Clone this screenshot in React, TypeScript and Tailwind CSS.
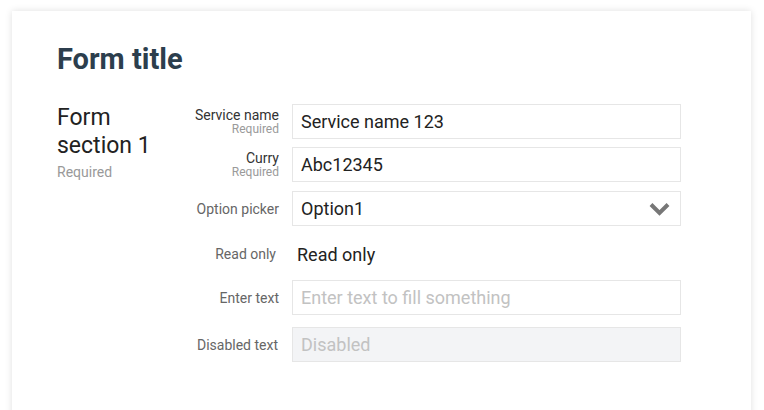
import React from "react";

const font = { fontFamily: "Roboto, 'Noto Sans', sans-serif" };

function Label({ text, required, dark }: { text: string; required?: boolean; dark?: boolean }) {
  return (
    <div className="flex flex-col items-end justify-center text-right">
      <div className={`text-[14px] leading-[16px] ${dark ? "text-[#333]" : "text-[#666]"}`}>{text}</div>
      {required && <div className="text-[12px] leading-[13px] text-[#9a9a9a]">Required</div>}
    </div>
  );
}

function Box({ children, disabled }: { children: React.ReactNode; disabled?: boolean }) {
  return (
    <div
      className={`h-[35px] w-[389px] border flex items-center pl-[8px] pr-[10px] text-[18px] ${
        disabled ? "bg-[#f3f4f6] border-[#e6e6e6]" : "bg-white border-[#e6e6e6]"
      }`}
    >
      {children}
    </div>
  );
}

export default function App() {
  return (
    <div className="h-[410px] bg-white pl-[12px] pr-[13px] pt-[11px] overflow-hidden" style={font}>
      <div className="h-[420px] bg-white shadow-[0_0_7px_rgba(0,0,0,0.13)] pl-[45px] pt-[30px]">
        <h1 className="text-[29px] leading-[36px] font-bold text-[#2c3e4d]">Form title</h1>
        <div className="flex mt-[27px]">
          <div className="w-[110px]">
            <div className="text-[23px] leading-[28px] text-[#222]">
              Form
              <br />
              section 1
            </div>
            <div className="text-[14px] leading-[17px] text-[#999] mt-[4px]">Required</div>
          </div>
          <div className="grid grid-cols-[112px_389px] gap-x-[13px] mt-[0px] text-[#222]">
            <Label text="Service name" required dark />
            <Box>Service name 123</Box>

            <div className="mt-[8px] flex justify-end">
              <Label text="Curry" required dark />
            </div>
            <div className="mt-[8px]">
              <Box>Abc12345</Box>
            </div>

            <div className="mt-[9px] flex justify-end">
              <Label text="Option picker" />
            </div>
            <div className="mt-[9px]">
              <Box>
                <span className="flex-1">Option1</span>
                <svg width="21" height="14" viewBox="0 0 21 14">
                  <path d="M2 2.5 L10.5 11 L19 2.5" fill="none" stroke="#777" strokeWidth="4" />
                </svg>
              </Box>
            </div>

            <div className="mt-[8px] h-[37px] pt-[2px] flex justify-end pr-[3px]">
              <Label text="Read only" />
            </div>
            <div className="mt-[8px] h-[37px] pt-[4px] flex items-center pl-[5px] text-[18px]">Read only</div>

            <div className="mt-[9px] flex justify-end">
              <Label text="Enter text" />
            </div>
            <div className="mt-[9px]">
              <Box>
                <span className="text-[#c2c2c2]">Enter text to fill something</span>
              </Box>
            </div>

            <div className="mt-[12px] flex justify-end pr-[1px]">
              <Label text="Disabled text" />
            </div>
            <div className="mt-[12px]">
              <Box disabled>
                <span className="text-[#c2c2c2]">Disabled</span>
              </Box>
            </div>
          </div>
        </div>
      </div>
    </div>
  );
}
